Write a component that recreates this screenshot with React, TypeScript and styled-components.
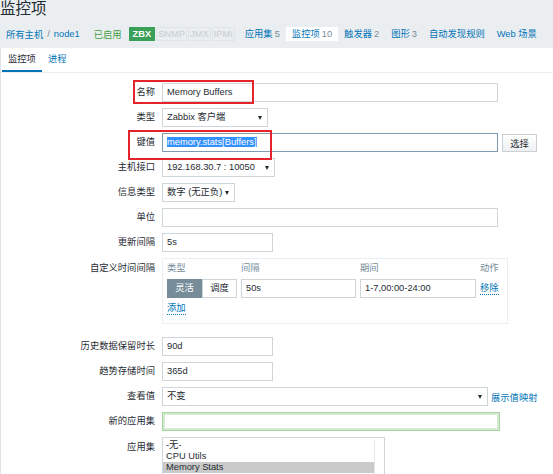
import React from 'react';
import styled, { createGlobalStyle } from 'styled-components';

const GlobalStyle = createGlobalStyle`
  html, body {
    margin: 0;
    padding: 0;
  }
  body {
    background: #ebeef0;
    font-family: "Liberation Sans", Arial, "Noto Sans CJK SC", sans-serif;
    font-size: 9.3px;
    color: #1f2c33;
    overflow: hidden;
  }
`;

const Page = styled.div`
  position: relative;
  width: 553px;
  height: 474px;
  overflow: hidden;
`;

const Header = styled.header`
  background: #ebeef0;
`;

const Title = styled.h1`
  margin: 0;
  height: 20px;
  font-size: 15.5px;
  line-height: 18px;
  font-weight: normal;
  color: #1f2c33;
`;

const NavBar = styled.nav`
  display: flex;
  align-items: center;
  height: 28px;
  padding-left: 6px;
  white-space: nowrap;
`;

const Crumbs = styled.div`
  display: flex;
  align-items: center;
`;

const Link = styled.a`
  color: #0275b8;
  text-decoration: none;
  cursor: pointer;
`;

const Sep = styled.span`
  color: #768d99;
  margin: 0 4px;
`;

const Status = styled.span`
  color: #429e47;
  margin-left: 14px;
`;

const Badges = styled.div`
  display: flex;
  gap: 1px;
  margin-left: 7px;
`;

const Badge = styled.span<{ $on?: boolean }>`
  height: 14px;
  line-height: 12px;
  box-sizing: border-box;
  padding: 0 ${({ $on }) => ($on ? '3px' : '1px')};
  border: 1px solid ${({ $on }) => ($on ? '#3a9f57' : '#dfe4e7')};
  background: ${({ $on }) => ($on ? '#3a9f57' : 'transparent')};
  color: ${({ $on }) => ($on ? '#ffffff' : '#c5cdd2')};
  font-weight: ${({ $on }) => ($on ? 'bold' : 'normal')};
`;

const NavLinks = styled.div`
  display: flex;
  margin-left: 4px;
`;

const NavLink = styled.a<{ $active?: boolean }>`
  height: 14px;
  line-height: 14px;
  padding: 0 6px;
  color: #0275b8;
  background: ${({ $active }) => ($active ? '#ffffff' : 'transparent')};
  text-decoration: none;
`;

const Count = styled.span`
  color: #768d99;
  margin-left: 2px;
`;

const Content = styled.main`
  background: #ffffff;
  border-left: 1px solid #dfe4e7;
  height: 426px;
`;

const Tabs = styled.div`
  display: flex;
  height: 24px;
  padding-left: 1px;
  border-bottom: 1px solid #ebeef0;
`;

const Tab = styled.a<{ $active?: boolean }>`
  box-sizing: border-box;
  height: 24px;
  line-height: 22px;
  padding: 0 6px;
  color: ${({ $active }) => ($active ? '#1f2c33' : '#0275b8')};
  border-bottom: 2px solid ${({ $active }) => ($active ? '#0275b8' : 'transparent')};
`;

const Form = styled.div`
  display: grid;
  grid-template-columns: 154px 1fr;
  column-gap: 7px;
  row-gap: 6px;
  align-items: center;
  padding-top: 10px;
`;

const Label = styled.div<{ $top?: boolean }>`
  text-align: right;
  line-height: 19px;
  align-self: ${({ $top }) => ($top ? 'start' : 'center')};
  padding-top: ${({ $top }) => ($top ? '1px' : '0')};
  white-space: nowrap;
`;

const Field = styled.div`
  display: flex;
  align-items: center;
  white-space: nowrap;
`;

const TextBox = styled.div<{ $w: number; $focus?: 'blue' | 'green' }>`
  box-sizing: border-box;
  width: ${({ $w }) => $w}px;
  height: 19px;
  line-height: 17px;
  padding: 0 4px;
  border: 1px solid
    ${({ $focus }) => ($focus === 'blue' ? '#7e9bb0' : $focus === 'green' ? '#a9d3a4' : '#cfd6da')};
  box-shadow: ${({ $focus }) => ($focus === 'green' ? 'inset 0 0 0 2px #d4ebd1' : 'none')};
  background: #ffffff;
  color: #1f2c33;
  overflow: hidden;
`;

const Highlight = styled.span`
  background: #3390ff;
  color: #ffffff;
`;

const Select = styled.div<{ $w: number }>`
  position: relative;
  box-sizing: border-box;
  width: ${({ $w }) => $w}px;
  height: 19px;
  line-height: 17px;
  padding: 0 14px 0 4px;
  border: 1px solid #cfd6da;
  background: #ffffff;

  &::after {
    content: '';
    position: absolute;
    right: 5px;
    top: 7px;
    border-left: 2.5px solid transparent;
    border-right: 2.5px solid transparent;
    border-top: 4px solid #1f2c33;
  }
`;

const Button = styled.button`
  box-sizing: border-box;
  margin-left: 4px;
  width: 35px;
  height: 18px;
  padding: 0;
  font: inherit;
  color: #1f2c33;
  border: 1px solid #c9cfd3;
  background: linear-gradient(#ffffff, #eef0f1);
`;

const SideLink = styled.a`
  margin-left: 3px;
  color: #0275b8;
`;

const IntervalBox = styled.div`
  box-sizing: border-box;
  width: 346px;
  margin-bottom: 7px;
  padding: 2px 5px 8px 4px;
  border: 1px solid #ebeef0;
  display: grid;
  grid-template-columns: 70px 115px 116px auto;
  column-gap: 4px;
  row-gap: 4px;
  align-items: center;
`;

const ColHead = styled.div`
  color: #768d99;
  line-height: 14px;
`;

const Segmented = styled.div`
  display: flex;
`;

const Segment = styled.div<{ $active?: boolean }>`
  box-sizing: border-box;
  width: 35px;
  height: 19px;
  line-height: 17px;
  text-align: center;
  border: 1px solid ${({ $active }) => ($active ? '#768d99' : '#cfd6da')};
  background: ${({ $active }) => ($active ? '#768d99' : '#ffffff')};
  color: ${({ $active }) => ($active ? '#ffffff' : '#1f2c33')};
`;

const ActionLink = styled.a`
  justify-self: start;
  color: #0275b8;
  line-height: 12px;
  border-bottom: 1px dotted #0275b8;
`;

const ListBox = styled.div`
  box-sizing: border-box;
  width: 223px;
  height: 60px;
  align-self: start;
  display: flex;
  border: 1px solid #cfd6da;
  padding-top: 2px;
`;

const Options = styled.div`
  flex: 1;
`;

const Option = styled.div<{ $selected?: boolean }>`
  line-height: 11px;
  padding-left: 3px;
  background: ${({ $selected }) => ($selected ? '#cacaca' : 'transparent')};
`;

const Scroll = styled.div`
  width: 9px;
  border-left: 1px solid #e6e6e6;
`;

const Mark = styled.div<{ $x: number; $y: number; $w: number; $h: number }>`
  position: absolute;
  left: ${({ $x }) => $x}px;
  top: ${({ $y }) => $y}px;
  width: ${({ $w }) => $w}px;
  height: ${({ $h }) => $h}px;
  box-sizing: border-box;
  border: 2px solid #e5232a;
  pointer-events: none;
`;

const navItems = [
  { label: '应用集', count: '5' },
  { label: '监控项', count: '10', active: true },
  { label: '触发器', count: '2' },
  { label: '图形', count: '3' },
  { label: '自动发现规则' },
  { label: 'Web 场景' },
];

export default function App() {
  return (
    <Page>
      <GlobalStyle />
      <Header>
        <Title>监控项</Title>
        <NavBar>
          <Crumbs>
            <Link>所有主机</Link>
            <Sep>/</Sep>
            <Link>node1</Link>
          </Crumbs>
          <Status>已启用</Status>
          <Badges>
            <Badge $on>ZBX</Badge>
            <Badge>SNMP</Badge>
            <Badge>JMX</Badge>
            <Badge>IPMI</Badge>
          </Badges>
          <NavLinks>
            {navItems.map((n) => (
              <NavLink key={n.label} $active={n.active}>
                {n.label}
                {n.count && <Count>{n.count}</Count>}
              </NavLink>
            ))}
          </NavLinks>
        </NavBar>
      </Header>

      <Content>
        <Tabs>
          <Tab $active>监控项</Tab>
          <Tab>进程</Tab>
        </Tabs>

        <Form>
          <Label>名称</Label>
          <Field>
            <TextBox $w={336}>Memory Buffers</TextBox>
          </Field>

          <Label>类型</Label>
          <Field>
            <Select $w={106}>Zabbix 客户端</Select>
          </Field>

          <Label>键值</Label>
          <Field>
            <TextBox $w={336} $focus="blue">
              <Highlight>memory.stats[Buffers]</Highlight>
            </TextBox>
            <Button>选择</Button>
          </Field>

          <Label>主机接口</Label>
          <Field>
            <Select $w={113}>192.168.30.7 : 10050</Select>
          </Field>

          <Label>信息类型</Label>
          <Field>
            <Select $w={73}>数字 (无正负)</Select>
          </Field>

          <Label>单位</Label>
          <Field>
            <TextBox $w={336} />
          </Field>

          <Label>更新间隔</Label>
          <Field>
            <TextBox $w={111}>5s</TextBox>
          </Field>

          <Label $top>自定义时间间隔</Label>
          <IntervalBox>
            <ColHead>类型</ColHead>
            <ColHead>间隔</ColHead>
            <ColHead>期间</ColHead>
            <ColHead>动作</ColHead>
            <Segmented>
              <Segment $active>灵活</Segment>
              <Segment>调度</Segment>
            </Segmented>
            <TextBox $w={115}>50s</TextBox>
            <TextBox $w={116}>1-7,00:00-24:00</TextBox>
            <ActionLink>移除</ActionLink>
            <ActionLink>添加</ActionLink>
          </IntervalBox>

          <Label>历史数据保留时长</Label>
          <Field>
            <TextBox $w={111}>90d</TextBox>
          </Field>

          <Label>趋势存储时间</Label>
          <Field>
            <TextBox $w={111}>365d</TextBox>
          </Field>

          <Label>查看值</Label>
          <Field>
            <Select $w={326}>不变</Select>
            <SideLink>展示值映射</SideLink>
          </Field>

          <Label>新的应用集</Label>
          <Field>
            <TextBox $w={338} $focus="green" />
          </Field>

          <Label $top>应用集</Label>
          <ListBox>
            <Options>
              <Option>-无-</Option>
              <Option>CPU Utils</Option>
              <Option $selected>Memory Stats</Option>
            </Options>
            <Scroll />
          </ListBox>
        </Form>
      </Content>

      <Mark $x={133} $y={80} $w={121} $h={24} />
      <Mark $x={128} $y={130} $w={144} $h={30} />
    </Page>
  );
}
